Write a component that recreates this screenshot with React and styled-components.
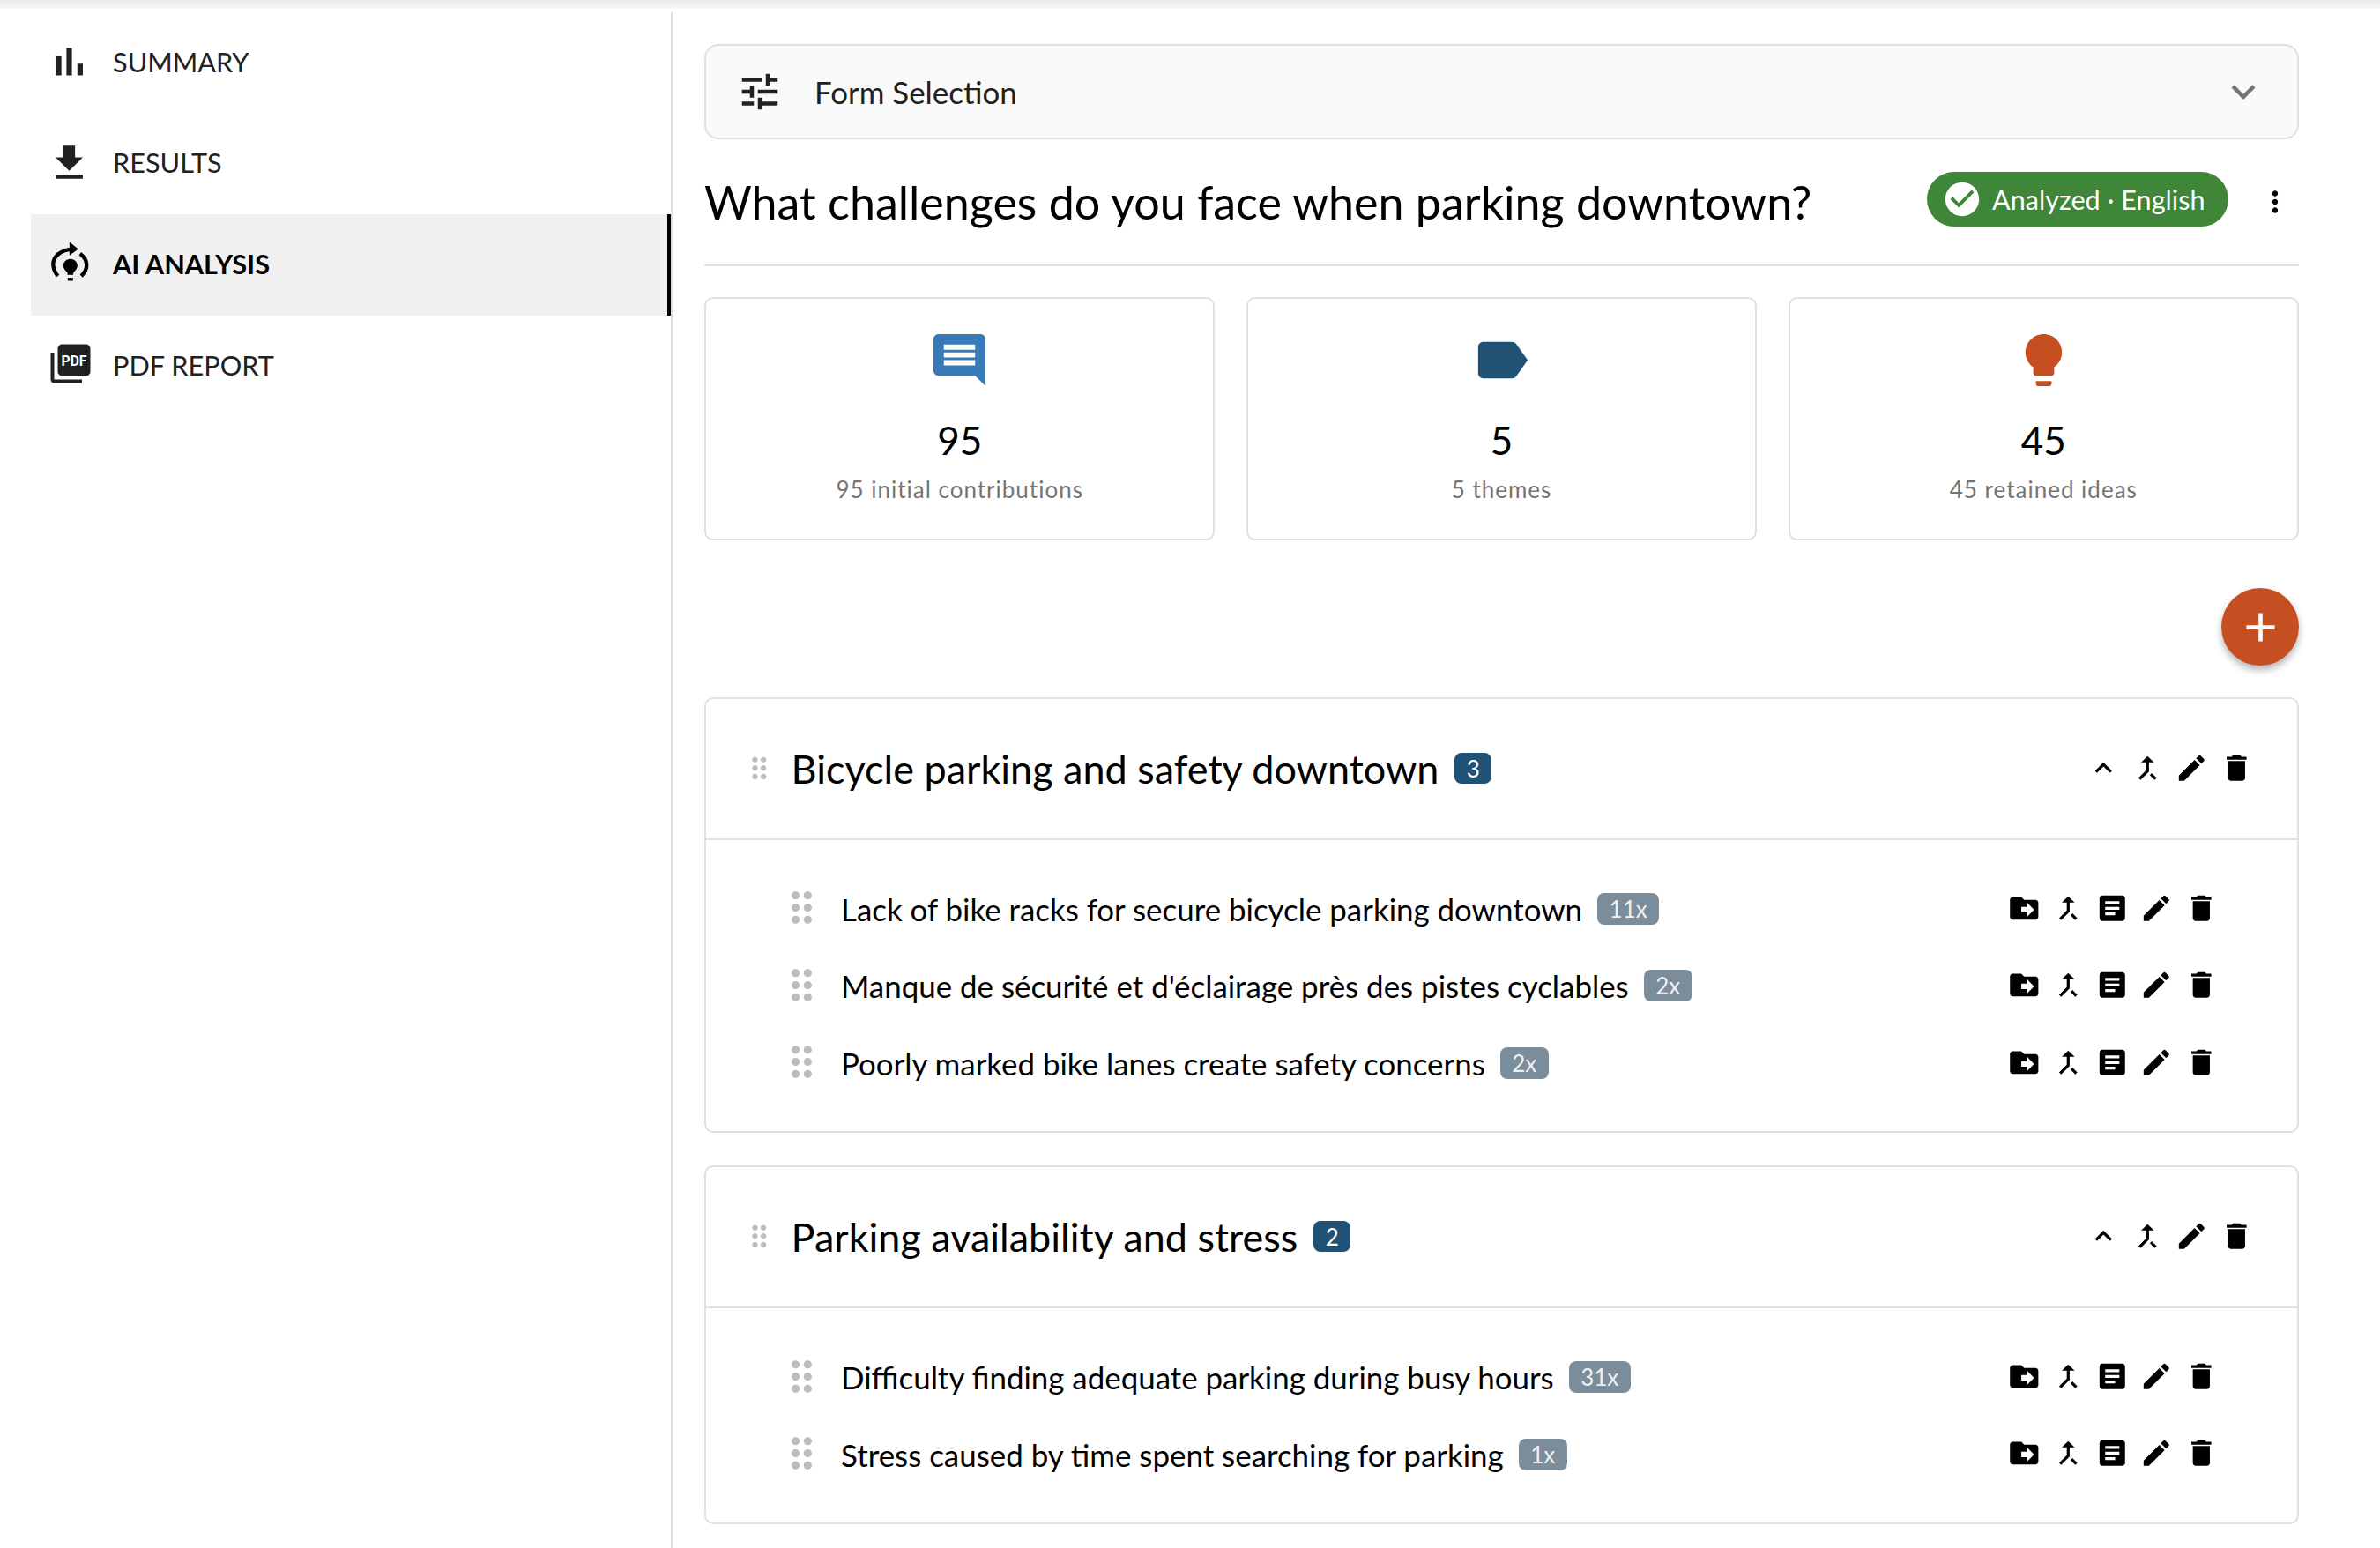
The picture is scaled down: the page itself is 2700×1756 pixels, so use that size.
import styled, { createGlobalStyle } from 'styled-components';
import {
  MdAdd,
  MdArticle,
  MdCallMerge,
  MdCheckCircle,
  MdComment,
  MdDelete,
  MdDragIndicator,
  MdDriveFileMove,
  MdEdit,
  MdExpandLess,
  MdExpandMore,
  MdFileDownload,
  MdLabel,
  MdLightbulb,
  MdMoreVert,
  MdTune,
} from 'react-icons/md';

const GlobalStyle = createGlobalStyle`
  html, body {
    margin: 0;
    background: #fff;
  }
  body {
    font-family: Lato, "Liberation Sans", sans-serif;
    color: #000;
  }
`;

const Page = styled.div`
  width: 2700px;
  height: 1756px;
  overflow: hidden;
`;

const TopShadow = styled.div`
  height: 10px;
  margin-bottom: 4px;
  background: linear-gradient(#eaeaea, #f8f8f8);
`;

const Layout = styled.div`
  display: flex;
  height: 1742px;
`;

// sidebar
const Sidebar = styled.nav`
  box-sizing: border-box;
  width: 763px;
  padding-left: 35px;
  border-right: 2px solid #e0e0e0;
`;

const NavItem = styled.div`
  box-sizing: border-box;
  display: flex;
  align-items: center;
  width: 726px;
  height: 114.6px;
  padding: 0 0 2px 93px;
  position: relative;
  font-size: 30.7px;
  font-weight: ${(p) => (p.$active ? 700 : 400)};
  color: ${(p) => (p.$active ? '#000' : '#212121')};
  background: ${(p) => (p.$active ? '#f0f0f0' : 'transparent')};
  border-right: ${(p) => (p.$active ? '4px solid #000' : 'none')};
`;

const NavIcon = styled.span`
  position: absolute;
  left: ${(p) => p.$left}px;
  top: calc(50% - 1px);
  transform: translateY(-50%);
  display: flex;
  color: ${(p) => (p.$active ? '#000' : '#212121')};
  svg {
    display: block;
    width: ${(p) => p.$size}px;
    height: ${(p) => p.$size}px;
  }
`;

// main column
const Main = styled.main`
  box-sizing: border-box;
  width: 1845px;
  padding-top: 36px;
  padding-left: 36px;
`;

const FormSelect = styled.div`
  box-sizing: border-box;
  display: flex;
  align-items: center;
  width: 1809px;
  height: 108px;
  padding: 0 34px 0 34px;
  background: #fafafa;
  border: 2px solid #e0e0e0;
  border-radius: 16px;
  font-size: 34.9px;
  color: #212121;
  svg {
    display: block;
    flex: none;
  }
`;

const FormLabel = styled.span`
  flex: 1;
  margin-left: 35px;
`;

const TitleRow = styled.div`
  box-sizing: border-box;
  display: flex;
  align-items: center;
  width: 1809px;
  height: 144px;
  border-bottom: 2px solid #e0e0e0;
`;

const Title = styled.h1`
  flex: 1;
  margin: 0;
  font-size: 52px;
  font-weight: 400;
`;

const StatusChip = styled.div`
  box-sizing: border-box;
  display: flex;
  align-items: center;
  gap: 11px;
  width: 342px;
  height: 62px;
  margin: 0 26px 6px 0;
  padding-left: 17px;
  border-radius: 31px;
  background: #3f8638;
  color: #fff;
  font-size: 30.6px;
  svg {
    display: block;
    width: 46px;
    height: 46px;
  }
`;

const MoreButton = styled.div`
  display: flex;
  justify-content: center;
  width: 54px;
  svg {
    display: block;
    width: 38px;
    height: 38px;
  }
`;

const StatGrid = styled.section`
  display: grid;
  grid-template-columns: repeat(3, 1fr);
  gap: 35.4px;
  width: 1809px;
  margin-top: 35px;
`;

const StatCard = styled.div`
  box-sizing: border-box;
  display: flex;
  flex-direction: column;
  align-items: center;
  height: 276px;
  padding-top: 34px;
  border: 2px solid #e0e0e0;
  border-radius: 10px;
  svg {
    display: block;
    width: 71px;
    height: 71px;
    color: ${(p) => p.$color};
  }
`;

const StatNumber = styled.div`
  margin-top: 29px;
  font-size: 44px;
  line-height: 52px;
`;

const StatLabel = styled.div`
  margin-top: 14px;
  font-size: 26px;
  line-height: 32px;
  letter-spacing: 1px;
  color: #757575;
`;

const FabRow = styled.div`
  display: flex;
  justify-content: flex-end;
  width: 1809px;
  margin: 54px 0 35.5px;
`;

const Fab = styled.div`
  display: flex;
  align-items: center;
  justify-content: center;
  width: 88px;
  height: 88px;
  border-radius: 50%;
  background: #c64f22;
  color: #fff;
  box-shadow: 0 5px 9px rgba(0, 0, 0, 0.3);
  svg {
    display: block;
    width: 55px;
    height: 55px;
  }
`;

const ThemeCard = styled.section`
  box-sizing: border-box;
  width: 1809px;
  margin-bottom: 36.5px;
  border: 2px solid #e0e0e0;
  border-radius: 10px;
`;

const ThemeHeader = styled.header`
  box-sizing: border-box;
  display: flex;
  align-items: center;
  height: 160px;
  padding: 0 44px 0 41px;
  border-bottom: 2px solid #e0e0e0;
`;

const HeaderHandle = styled.span`
  display: flex;
  color: #bdbdbd;
  svg {
    display: block;
    width: 38.6px;
    height: 38.6px;
  }
`;

const ThemeTitle = styled.h2`
  margin: 0 18px 0 17px;
  font-size: 45px;
  font-weight: 400;
`;

const CountBadge = styled.span`
  box-sizing: border-box;
  display: flex;
  align-items: center;
  justify-content: center;
  width: 42px;
  height: 35px;
  border-radius: 8px;
  background: #205276;
  color: #fff;
  font-size: 26px;
`;

const Actions = styled.div`
  display: flex;
  margin-left: auto;
`;

const ActionButton = styled.span`
  display: flex;
  align-items: center;
  justify-content: center;
  width: 50.2px;
  height: 50px;
  svg {
    display: block;
    width: 38.6px;
    height: 38.6px;
  }
`;

const IdeaList = styled.div`
  padding: 33.5px 84px 34.5px 81px;
`;

const IdeaRow = styled.div`
  display: flex;
  align-items: center;
  height: 87.6px;
`;

const IdeaHandle = styled.span`
  display: flex;
  color: #bdbdbd;
  svg {
    display: block;
    width: 55px;
    height: 55px;
  }
`;

const IdeaText = styled.span`
  margin: 0 17px 0 17px;
  padding-top: 3px;
  font-size: 34.9px;
`;

const RepeatBadge = styled.span`
  display: flex;
  align-items: center;
  justify-content: center;
  height: 36px;
  margin-top: 2px;
  padding: 0 13.5px;
  border-radius: 8px;
  background: #7b8c9b;
  color: #eef1f3;
  font-size: 26px;
`;

// the package draws this bar chart with wider bars than the reference
function BarsIcon() {
  return (
    <svg viewBox="0 0 24 24" fill="currentColor">
      <path d="M5 9.2h3V19H5zM10.6 5h2.8v14h-2.8zm5.6 8H19v6h-2.8z" />
    </svg>
  );
}

// the sidebar icon for the active tab, no matching icon in the packages
function AiIcon() {
  return (
    <svg viewBox="0 6 180 195" fill="none">
      <path d="M45 146C24 118 24 90 46 72C58 62 72 56 92 55" stroke="currentColor" strokeWidth="13" />
      <path d="M85 30L115 54L85 76Z" fill="currentColor" />
      <path d="M121 70C150 92 150 122 125 146" stroke="currentColor" strokeWidth="13" />
      <path
        d="M88 88C74 88 64 99 64 111C64 120 70 126 78 134V142H98V134C106 126 112 120 112 111C112 99 102 88 88 88Z"
        fill="currentColor"
      />
      <rect x="79" y="152" width="18" height="10" fill="currentColor" />
    </svg>
  );
}

function PdfIcon() {
  return (
    <svg viewBox="0 1.5 60 55">
      <rect x="15.5" y="5.5" width="37" height="36" rx="5" fill="currentColor" />
      <path d="M9.5 15V45C9.5 46.7 10.3 47.5 12 47.5H43" fill="none" stroke="currentColor" strokeWidth="4" />
      <text
        x="34"
        y="30"
        textAnchor="middle"
        fontFamily="Roboto, sans-serif"
        fontWeight="700"
        fontSize="17"
        textLength="29"
        lengthAdjust="spacingAndGlyphs"
        fill="#fff"
      >
        PDF
      </text>
    </svg>
  );
}

const navItems = [
  { label: 'SUMMARY', icon: <BarsIcon />, left: 17, size: 53 },
  { label: 'RESULTS', icon: <MdFileDownload />, left: 17, size: 53 },
  { label: 'AI ANALYSIS', icon: <AiIcon />, left: 12.5, size: 65, active: true },
  { label: 'PDF REPORT', icon: <PdfIcon />, left: 15, size: 60 },
];

const themes = [
  {
    title: 'Bicycle parking and safety downtown',
    ideas: [
      { text: 'Lack of bike racks for secure bicycle parking downtown', count: '11x' },
      { text: "Manque de sécurité et d'éclairage près des pistes cyclables", count: '2x' },
      { text: 'Poorly marked bike lanes create safety concerns', count: '2x' },
    ],
  },
  {
    title: 'Parking availability and stress',
    ideas: [
      { text: 'Difficulty finding adequate parking during busy hours', count: '31x' },
      { text: 'Stress caused by time spent searching for parking', count: '1x' },
    ],
  },
];

function App() {
  return (
    <Page>
      <GlobalStyle />
      <TopShadow />
      <Layout>
        <Sidebar>
          {navItems.map((item) => (
            <NavItem key={item.label} $active={item.active}>
              <NavIcon $left={item.left} $size={item.size} $active={item.active}>
                {item.icon}
              </NavIcon>
              {item.label}
            </NavItem>
          ))}
        </Sidebar>
        <Main>
          <FormSelect>
            <MdTune size={54} />
            <FormLabel>Form Selection</FormLabel>
            <MdExpandMore size={54} color="#757575" />
          </FormSelect>
          <TitleRow>
            <Title>What challenges do you face when parking downtown?</Title>
            <StatusChip>
              <MdCheckCircle />
              Analyzed · English
            </StatusChip>
            <MoreButton>
              <MdMoreVert />
            </MoreButton>
          </TitleRow>
          <StatGrid>
            <StatCard $color="#377ab6">
              <MdComment />
              <StatNumber>95</StatNumber>
              <StatLabel>95 initial contributions</StatLabel>
            </StatCard>
            <StatCard $color="#205276">
              <MdLabel />
              <StatNumber>5</StatNumber>
              <StatLabel>5 themes</StatLabel>
            </StatCard>
            <StatCard $color="#c64f22">
              <MdLightbulb />
              <StatNumber>45</StatNumber>
              <StatLabel>45 retained ideas</StatLabel>
            </StatCard>
          </StatGrid>
          <FabRow>
            <Fab>
              <MdAdd />
            </Fab>
          </FabRow>
          {themes.map((theme) => (
            <ThemeCard key={theme.title}>
              <ThemeHeader>
                <HeaderHandle>
                  <MdDragIndicator />
                </HeaderHandle>
                <ThemeTitle>{theme.title}</ThemeTitle>
                <CountBadge>{theme.ideas.length}</CountBadge>
                <Actions>
                  <ActionButton><MdExpandLess /></ActionButton>
                  <ActionButton><MdCallMerge /></ActionButton>
                  <ActionButton><MdEdit /></ActionButton>
                  <ActionButton><MdDelete /></ActionButton>
                </Actions>
              </ThemeHeader>
              <IdeaList>
                {theme.ideas.map((idea) => (
                  <IdeaRow key={idea.text}>
                    <IdeaHandle>
                      <MdDragIndicator />
                    </IdeaHandle>
                    <IdeaText>{idea.text}</IdeaText>
                    <RepeatBadge>{idea.count}</RepeatBadge>
                    <Actions>
                      <ActionButton><MdDriveFileMove /></ActionButton>
                      <ActionButton><MdCallMerge /></ActionButton>
                      <ActionButton><MdArticle /></ActionButton>
                      <ActionButton><MdEdit /></ActionButton>
                      <ActionButton><MdDelete /></ActionButton>
                    </Actions>
                  </IdeaRow>
                ))}
              </IdeaList>
            </ThemeCard>
          ))}
        </Main>
      </Layout>
    </Page>
  );
}

export default App;
